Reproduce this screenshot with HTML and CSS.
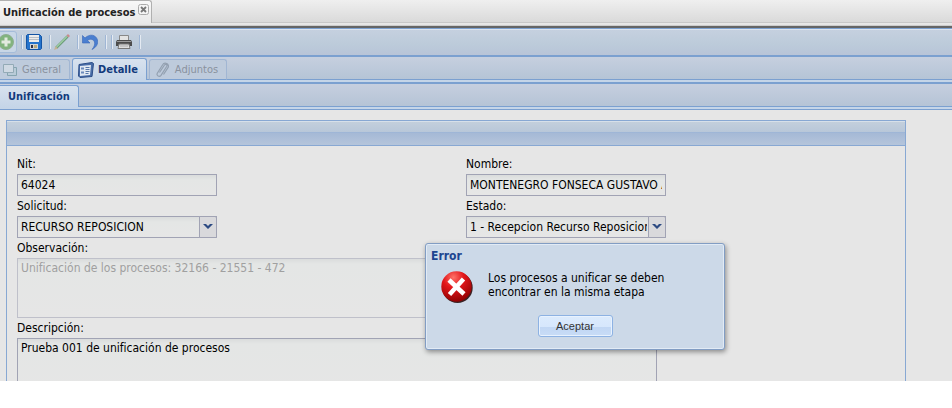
FILE: index.html
```html
<!DOCTYPE html>
<html lang="es">
<head>
  <meta charset="UTF-8">
  <meta name="viewport" content="width=device-width, initial-scale=1">
  <title>Unificación de procesos</title>
  <link rel="stylesheet" href="styles.css">
</head>
<body>
  <div class="app">
    <header class="window-tabs">
      <div class="window-tab">
        <span>Unificación de procesos</span>
        <button class="close" type="button" aria-label="Cerrar">
          <svg width="11" height="11" viewBox="0 0 11 11">
            <rect x=".5" y=".5" width="10" height="10" rx="2" fill="#f4f4f4" stroke="#aaa"/>
            <path d="M3 3l5 5M8 3l-5 5" stroke="#777" stroke-width="1.8"/>
          </svg>
        </button>
      </div>
    </header>

    <div class="toolbar">
      <button class="tool framed" type="button" aria-label="Nuevo">
        <svg width="16" height="16" viewBox="0 0 16 16">
          <circle cx="8" cy="8" r="7.5" fill="#82b47e" stroke="#8fae91"/>
          <path d="M8 3.5v9M3.5 8h9" stroke="#e2eadf" stroke-width="3"/>
        </svg>
      </button>
      <i class="sep"></i>
      <button class="tool" type="button" aria-label="Guardar">
        <svg width="16" height="16" viewBox="0 0 16 16">
          <path d="M.5 1.5l1-1h12l2 2v12l-1 1h-13l-1-1z" fill="#2573cc" stroke="#1454a4"/>
          <path d="M3 1h10v7H3z" fill="#ececec"/>
          <path d="M3 3.5h10M3 5.5h10" stroke="#b8bec5"/>
          <path d="M4 10h8v5H4z" fill="#d0d3d6"/>
          <path d="M5 11h2v3H5z" fill="#334"/>
          <path d="M8 11h3v3H8z" fill="#b8a87a"/>
        </svg>
      </button>
      <i class="sep"></i>
      <button class="tool" type="button" aria-label="Editar">
        <svg width="16" height="16" viewBox="0 0 16 16">
          <path d="M2 14L13.500 2.500" stroke="#6a9b78" stroke-width="2.600"/>
          <path d="M2.500 13L13 2.500" stroke="#9fcea5" stroke-width="1.200"/>
          <path d="M0 16l1.500-4 2.500 2.500z" fill="#c3b296"/>
          <path d="M12.500 1.500l1.500-1.500 2 2-1.500 1.500z" fill="#c98a8c"/>
        </svg>
      </button>
      <i class="sep"></i>
      <button class="tool" type="button" aria-label="Deshacer">
        <svg width="16" height="16" viewBox="0 0 16 16">
          <path d="M.5 1.500V9h7.500L5.500 6.500c2.500-2 6-1.500 7 1.500.7 2.500-.5 5-2.500 7.500 4-2 6.500-5.500 5.500-9.500C14 .5 7.500-.5 3 4z" fill="#4a7fd0" stroke="#3565b8" stroke-width=".6"/>
        </svg>
      </button>
      <i class="sep"></i>
      <i class="sep"></i>
      <button class="tool" type="button" aria-label="Imprimir">
        <svg width="16" height="16" viewBox="0 0 16 16">
          <path d="M3.500 1.500h9v5h-9z" fill="#e3e3e3" stroke="#888"/>
          <path d="M1 6h14l1 2v4H0V8z" fill="#4c4c4c"/>
          <path d="M1 7.500h14" stroke="#999"/>
          <path d="M3 10h10l1 4.500H2z" fill="#dedede" stroke="#777"/>
          <path d="M4 12h8" stroke="#aaa"/>
        </svg>
      </button>
      <i class="sep"></i>
    </div>

    <nav class="tabs main-tabs">
      <button class="tab first" type="button" disabled>
        <svg width="16" height="16" viewBox="0 0 16 16">
          <path d="M5.500 5.500h9v8h-9z" fill="#b9cbd8" stroke="#86a5b0"/>
          <path d="M1.500 2.500h10v8h-10z" fill="#cfd9e3" stroke="#93aab6"/>
        </svg>
        <span>General</span>
      </button>
      <button class="tab active" type="button">
        <svg width="16" height="16" viewBox="0 0 16 16">
          <path d="M1 2.500L14 .5l1.500 1-1.500 13-12 1L.5 14z" fill="#4a6ea9" stroke="#2d4e88"/>
          <path d="M2 4l11-1-1 10-10 1z" fill="#e2e9f2"/>
          <path d="M3 5.500h3v2H3zM3 9.500h3v2H3z" fill="#6b8abb"/>
          <path d="M7.500 5.500h4M7.500 7.500h4M7.500 9.500h4M7.500 11.500h3" stroke="#5778aa"/>
        </svg>
        <span>Detalle</span>
      </button>
      <button class="tab" type="button" disabled>
        <svg width="16" height="16" viewBox="0 0 16 16" fill="none" stroke="#93a0b0" stroke-width="1.200">
          <path d="M4.500 10.500l5-7.500c1-1.500 3.200-.3 2.300 1.300L6 13.300c-1.500 2.200-5 .3-3.700-2L7.500 3c2-3.500 7.500-1 5.500 2.700L8.500 12.500"/>
        </svg>
        <span>Adjuntos</span>
      </button>
    </nav>

    <nav class="tabs sub-tabs">
      <button class="tab active first" type="button">Unificación</button>
    </nav>

    <main class="content">
      <form class="panel">
        <div class="panel-header"></div>
        <div class="panel-body">
          <div class="row">
            <div class="field">
              <label for="nit">Nit:</label>
              <input type="text" id="nit" value="64024">
            </div>
            <div class="field">
              <label for="nombre">Nombre:</label>
              <input type="text" id="nombre" value="MONTENEGRO FONSECA GUSTAVO ADOLFO">
            </div>
          </div>
          <div class="row">
            <div class="field">
              <label for="solicitud">Solicitud:</label>
              <div class="combo">
                <select id="solicitud"><option>RECURSO REPOSICION</option></select>
                <span class="trigger"><svg width="10" height="6" viewBox="0 0 10 6"><path d="M0 0h3l2 2 2-2h3L5 5z" fill="#2c4a82"/></svg></span>
              </div>
            </div>
            <div class="field">
              <label for="estado">Estado:</label>
              <div class="combo">
                <select id="estado"><option>1 - Recepcion Recurso Reposicion</option></select>
                <span class="trigger"><svg width="10" height="6" viewBox="0 0 10 6"><path d="M0 0h3l2 2 2-2h3L5 5z" fill="#2c4a82"/></svg></span>
              </div>
            </div>
          </div>
          <div class="field wide">
            <label for="observacion">Observación:</label>
            <textarea id="observacion" disabled>Unificación de los procesos: 32166 - 21551 - 472</textarea>
          </div>
          <div class="field wide">
            <label for="descripcion">Descripción:</label>
            <textarea id="descripcion">Prueba 001 de unificación de procesos</textarea>
          </div>
        </div>
      </form>
    </main>

    <div class="dialog" role="alertdialog" aria-labelledby="dialog-title">
      <h2 id="dialog-title">Error</h2>
      <div class="dialog-body">
        <svg width="32" height="32" viewBox="0 0 32 32">
          <defs>
            <radialGradient id="red" cx=".4" cy=".2" r=".85">
              <stop offset="0" stop-color="#ff7268"/>
              <stop offset=".4" stop-color="#e3161a"/>
              <stop offset="1" stop-color="#8a0000"/>
            </radialGradient>
          </defs>
          <circle cx="16.500" cy="16.800" r="15.200" fill="#3a2224"/>
          <circle cx="15.500" cy="15.500" r="15.200" fill="url(#red)"/>
          <path d="M8 9l15 14M22.500 8L8.500 23.500" stroke="#fff" stroke-width="4.500"/>
        </svg>
        <p>Los procesos a unificar se deben encontrar en la misma etapa</p>
      </div>
      <button class="accept" type="button">Aceptar</button>
    </div>
  </div>
</body>
</html>
```

FILE: styles.css
```css
:root {
  --line: #7ba0d0;
  --field-line: #a1a3b4;
  --mask: #e6e6e6;
  --ui-font: Tahoma, "DejaVu Sans Condensed", "DejaVu Sans", sans-serif;
}

* {
  box-sizing: border-box;
}

body {
  margin: 0;
  background: #fff;
  color: #000;
  font-family: var(--ui-font);
  font-size: 12px;
}

button, input, select, textarea {
  font: inherit;
  color: inherit;
  margin: 0;
}

svg {
  display: block;
  flex: none;
}

.app {
  position: relative;
  display: flex;
  flex-direction: column;
  height: calc(100vh - 27px);
  overflow: hidden;
  background: var(--mask);
}

/* Window tabs */
.window-tabs {
  flex: none;
  height: 28px;
  border-bottom: 2px solid #666;
  background: linear-gradient(#efefef, #dadada 22px, #c8c8c8 22px, #c8c8c8 23px, #eaeaea 23px, #e4e4e4 25px, #ccc 25px);
}

.window-tab {
  display: inline-flex;
  gap: 3px;
  height: 23px;
  padding: 5px 2px 0 3px;
  border: solid #b0b0b0;
  border-width: 1px 1px 0 0;
  border-radius: 0 3px 0 0;
  background: linear-gradient(#f8f8f8, #e9e9e9);
  font-size: 11px;
  font-weight: bold;
  line-height: 14px;
  color: #222;
}

.close {
  height: 11px;
  margin-top: -2px;
  padding: 0;
  border: 0;
  background: none;
}

/* Toolbar */
.toolbar {
  display: flex;
  flex: none;
  align-items: center;
  gap: 4px;
  height: 29px;
  margin-left: -5px;
  border: solid var(--line);
  border-width: 1px 0 2px;
  background: linear-gradient(#dce4ee 1px, #c5d0df 1px, #bccbda 60%, #b8c4d8);
}

.tool {
  display: flex;
  align-items: center;
  justify-content: center;
  width: 22px;
  height: 22px;
  margin-left: -4px;
  padding: 0;
  border: 1px solid transparent;
  border-radius: 3px;
  background: none;
}

.tool.framed {
  margin-left: 0;
  border-color: #a5bcd9;
  background: #c8d6e6;
}

.sep {
  width: 2px;
  height: 14px;
  border-left: 1px solid #9fb6d5;
  background: #e4eaf2;
}

/* Tabs */
.tabs {
  display: flex;
  flex: none;
  align-items: flex-end;
  gap: 2px;
  padding-bottom: 2px;
  background: linear-gradient(#c6cfdf, #b5c4d6 22px, var(--line) 22px, var(--line) 23px, #c5d5e8 23px);
}

.main-tabs {
  height: 27px;
  border-bottom: 2px solid var(--line);
}

.sub-tabs {
  height: 26px;
  border-bottom: 1px solid var(--line);
}

.tab {
  display: flex;
  align-items: center;
  gap: 4px;
  height: 21px;
  padding: 0 8px 0 5px;
  border: 1px solid #a1b6d3;
  border-bottom-color: var(--line);
  border-radius: 3px 3px 0 0;
  background: #becbdc;
  font-size: 11px;
  color: #8a929e;
}

.tab.first {
  padding-left: 2px;
  border-left: 0;
  border-top-left-radius: 0;
}

.tab.active {
  height: 22px;
  border-color: var(--line);
  border-bottom: 0;
  background: linear-gradient(#d8e2ee, #c5d5e8);
  font-weight: bold;
  color: #123a7c;
}

.tab.active.first {
  padding-left: 8px;
}

/* Form */
.content {
  flex: 1;
  min-height: 0;
  padding: 10px 6px;
}

.panel {
  max-width: 900px;
  border: 1px solid #88a8d3;
}

.panel-header {
  height: 25px;
  border-bottom: 1px solid #88a8d3;
  background: linear-gradient(#d7e0e9 1px, #c3cfdc 1px, #b8c7d9 11px, #98b3d7 11px, #a5b9d6 12px, #b5c5db);
}

.panel-body {
  padding: 8px 0 10px;
}

.row {
  display: flex;
}

.row .field {
  flex: 1;
}

.field {
  padding-left: 10px;
}

.field label {
  display: block;
  height: 20px;
  line-height: 20px;
}

input, select, textarea {
  display: block;
  width: 200px;
  height: 22px;
  padding: 0 3px;
  border: 1px solid var(--field-line);
  border-radius: 0;
  outline: 0;
  background: linear-gradient(#dadcdc, #e4e6e5 5px, var(--mask));
}

textarea {
  width: 640px;
  height: 60px;
  padding: 2px 3px;
  line-height: 14px;
  resize: none;
}

textarea:disabled {
  border-color: #bfc0ca;
  color: #a0a0a0;
}

.combo {
  position: relative;
  width: 200px;
}

.combo select {
  appearance: none;
  padding-right: 18px;
}

.trigger {
  position: absolute;
  top: 0;
  right: 0;
  display: flex;
  align-items: center;
  justify-content: center;
  width: 18px;
  height: 22px;
  border: 1px solid var(--field-line);
  border-radius: 0 2px 0 0;
  background: #d9d9dc;
  pointer-events: none;
}

/* Error dialog */
.dialog {
  position: absolute;
  top: 243px;
  left: 425px;
  width: 300px;
  padding: 5px 5px 12px;
  border: 1px solid #829dc3;
  border-radius: 3px;
  background: #ccd9e8;
  box-shadow: inset 0 0 0 1px #e2ebf5, 1px 2px 5px rgba(0, 0, 0, .4);
}

.dialog h2 {
  margin: 0;
  font-size: 12px;
  line-height: 14px;
  color: #1c4591;
}

.dialog-body {
  display: flex;
  gap: 15px;
  padding: 8px 10px 12px;
}

.dialog-body p {
  width: 200px;
  margin: 0;
  line-height: 14px;
}

.accept {
  display: block;
  width: 75px;
  height: 22px;
  margin: 0 auto;
  padding: 0;
  border: 1px solid #8db2e3;
  border-radius: 3px;
  background: linear-gradient(#dcebfd, #d6e7fc 55%, #c1d7f4 55%, #c8dcf6);
  box-shadow: inset 0 0 0 1px #e8f2fe;
  font-family: Arial, "Liberation Sans", sans-serif;
  font-size: 11px;
  color: #333;
}
```
